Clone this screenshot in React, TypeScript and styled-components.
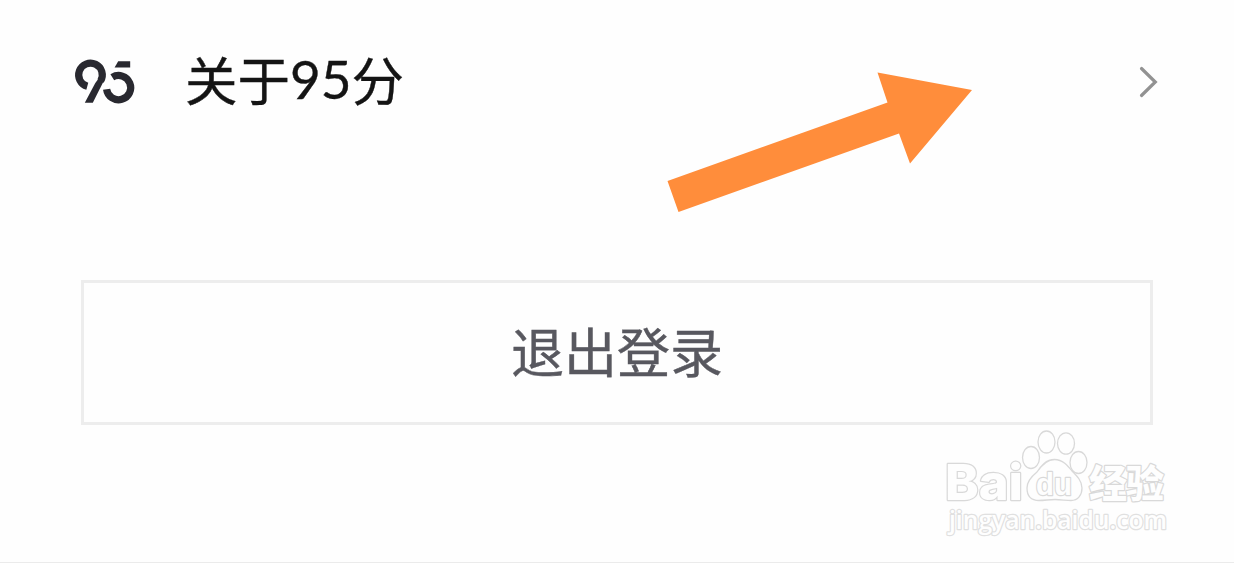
import * as React from "react";
import styled, {createGlobalStyle} from "styled-components";

class App extends React.Component {
  public render() {
    return (
      <Page>
        <GlobalStyle />
        {this.renderAboutRow()}
        {this.renderLogout()}
        {this.renderArrow()}
        {this.renderWatermark()}
      </Page>
    );
  }

  private renderAboutRow = () => {
    return (
      <Row>
        <Logo viewBox="0 0 64 48">
          <path d="M15.3 28.3A11.8 11.8 0 1 1 28.6 23" />
          <polygon points="12.8,44.8 23.3,25 27,20 33,20.5 20.8,44.8" />
          <path d="M40.3 19.3A12.1 12.1 0 1 1 34.6 31.2" />
          <polygon points="46.2,3.2 58.2,3.2 58.2,9.4 42.6,9.4" />
        </Logo>
        <RowTitle>
          关于<Digits>95</Digits>分
        </RowTitle>
        <Chevron viewBox="0 0 20 32">
          <path d="M2.5 2.5L16.3 16L2.5 29.5" />
        </Chevron>
      </Row>
    );
  };

  private renderLogout = () => {
    return <LogoutButton>退出登录</LogoutButton>;
  };

  private renderArrow = () => {
    return (
      <Arrow viewBox="0 0 308 144">
        <polygon points="0.5,111 220.5,32.5 210.5,2.5 305,20 243,93.5 232,63.5 11.5,142" />
      </Arrow>
    );
  };

  private renderWatermark = () => {
    return (
      <Watermark viewBox="0 0 230 115">
        <Brand x="5" y="74.5" textLength="78" lengthAdjust="spacingAndGlyphs">
          Bai
        </Brand>
        <ellipse cx="91" cy="32.5" rx="8.5" ry="11" />
        <ellipse cx="106.5" cy="17" rx="8.5" ry="11" />
        <ellipse cx="126" cy="18.5" rx="8.5" ry="10.7" />
        <ellipse cx="138.5" cy="37.5" rx="8.5" ry="11" />
        <path d="M114.5 34.5C106 34.5 101 41 97 47C92 51 87 56 87 63C87 71 91 75.5 99 75.5C105 75.5 109 74.5 115 74.5C121 74.5 126 75.5 131 75.5C138 75.5 142 70 142 63C142 56 137 51 132 46C128 41 123 34.5 114.5 34.5Z" />
        <Du x="96" y="69.5" textLength="36" lengthAdjust="spacingAndGlyphs">
          du
        </Du>
        <Chinese x="149" y="71.5" textLength="75">
          经验
        </Chinese>
        <Domain x="9" y="104" textLength="218" lengthAdjust="spacingAndGlyphs">
          jingyan.baidu.com
        </Domain>
      </Watermark>
    );
  };
}

const GlobalStyle = createGlobalStyle`
  body {
    margin: 0;
    background: #fefefe;
  }
`;

const Page = styled.div`
  position: relative;
  box-sizing: border-box;
  height: 563px;
  padding: 42px 81px 0;
  overflow: hidden;
  border-bottom: 1px solid #ebebeb;
  font-family: "Noto Sans CJK SC", sans-serif;
`;

const Row = styled.div`
  display: flex;
  align-items: center;
  height: 80px;
  margin: 0 -6px 0 -9px;
`;

const Logo = styled.svg`
  width: 64px;
  height: 48px;
  margin-right: 49px;

  path {
    fill: none;
    stroke: #292930;
    stroke-width: 7.2;
  }

  polygon {
    fill: #292930;
  }
`;

const RowTitle = styled.span`
  flex: 1;
  padding-bottom: 8px;
  color: #141414;
  font-size: 52.5px;
  line-height: 80px;
  white-space: nowrap;
  -webkit-text-stroke: 0.4px #141414;
`;

const Digits = styled.span`
  font-family: Lato, sans-serif;
  font-size: 53px;
  line-height: 1;
  vertical-align: 2px;
`;

const Chevron = styled.svg`
  width: 20px;
  height: 32px;

  path {
    fill: none;
    stroke: #929292;
    stroke-width: 3.2;
    stroke-linecap: round;
  }
`;

const LogoutButton = styled.button`
  display: flex;
  align-items: center;
  justify-content: center;
  box-sizing: border-box;
  width: 1072px;
  height: 145px;
  margin-top: 158px;
  padding: 0 0 5px;
  border: 3px solid #ededed;
  background: #fefefe;
  color: #58585f;
  font-family: inherit;
  font-size: 53px;
  -webkit-text-stroke: 0.4px #58585f;
`;

const Arrow = styled.svg`
  position: absolute;
  left: 667px;
  top: 70px;
  width: 308px;
  height: 144px;
  fill: #ff8d3b;
`;

const Watermark = styled.svg`
  position: absolute;
  left: 940px;
  top: 425px;
  width: 230px;
  height: 115px;
  overflow: visible;
  fill: #fefefe;
  stroke: #d9d9d9;
  stroke-width: 1.3;

  text {
    paint-order: stroke;
    stroke-width: 2.4;
    stroke-linejoin: round;
  }
`;

const Brand = styled.text`
  font-family: Inter, sans-serif;
  font-size: 50px;
  font-weight: 800;
`;

const Du = styled.text`
  font-family: "Liberation Sans", sans-serif;
  font-size: 31px;
  font-weight: bold;
`;

const Chinese = styled.text`
  font-family: "Noto Sans CJK SC", sans-serif;
  font-size: 38px;
  font-weight: 900;
`;

const Domain = styled.text`
  font-family: "Open Sans", sans-serif;
  font-size: 25px;
  font-weight: 600;
  stroke: #e0e0e0;
`;

export default App;
